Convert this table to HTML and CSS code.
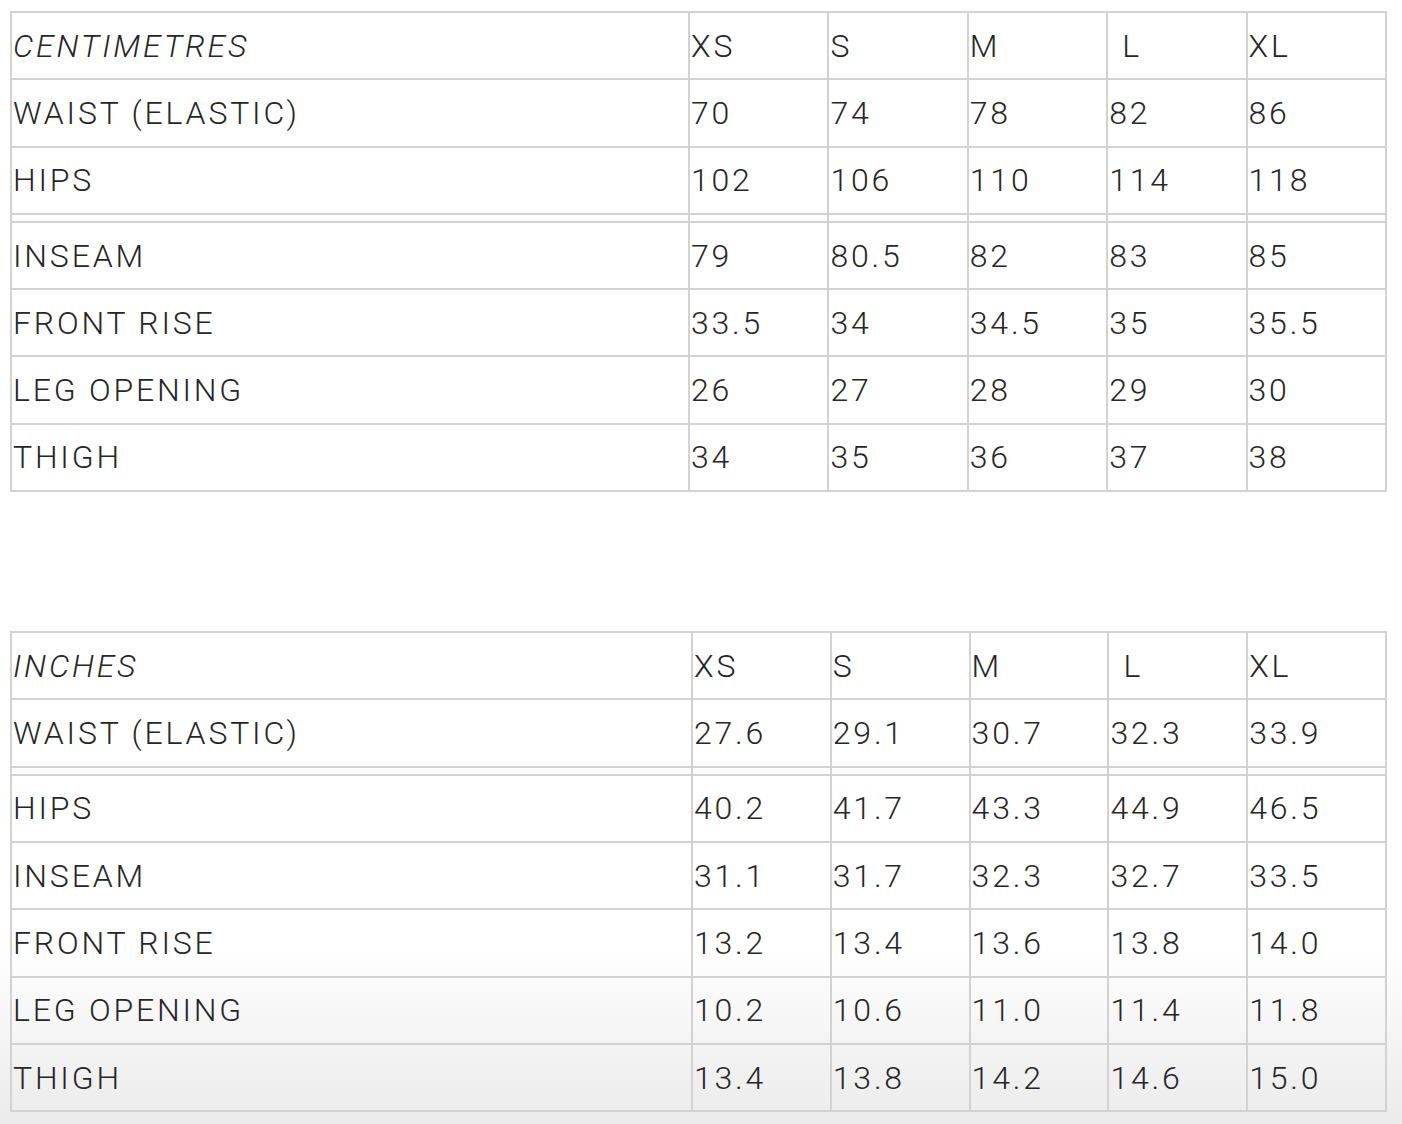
FILE: index.html
```html
<!DOCTYPE html>
<html>
<head>
<meta charset="utf-8">
<link rel="stylesheet" href="styles.css">
</head>
<body>
<div class="page">
  <table class="size-table cm">
    <colgroup><col class="label-col"><col><col><col><col><col></colgroup>
    <tr><td class="unit">CENTIMETRES</td><td>XS</td><td>S</td><td>M</td><td class="l">L</td><td>XL</td></tr>
    <tr><td>WAIST (ELASTIC)</td><td>70</td><td>74</td><td>78</td><td>82</td><td>86</td></tr>
    <tr><td>HIPS</td><td>102</td><td>106</td><td>110</td><td>114</td><td>118</td></tr>
    <tr class="spacer"><td></td><td></td><td></td><td></td><td></td><td></td></tr>
    <tr><td>INSEAM</td><td>79</td><td>80.5</td><td>82</td><td>83</td><td>85</td></tr>
    <tr><td>FRONT RISE</td><td>33.5</td><td>34</td><td>34.5</td><td>35</td><td>35.5</td></tr>
    <tr><td>LEG OPENING</td><td>26</td><td>27</td><td>28</td><td>29</td><td>30</td></tr>
    <tr><td>THIGH</td><td>34</td><td>35</td><td>36</td><td>37</td><td>38</td></tr>
  </table>

  <table class="size-table in">
    <colgroup><col class="label-col"><col><col><col><col><col></colgroup>
    <tr><td class="unit">INCHES</td><td>XS</td><td>S</td><td>M</td><td class="l">L</td><td>XL</td></tr>
    <tr><td>WAIST (ELASTIC)</td><td>27.6</td><td>29.1</td><td>30.7</td><td>32.3</td><td>33.9</td></tr>
    <tr class="spacer"><td></td><td></td><td></td><td></td><td></td><td></td></tr>
    <tr><td>HIPS</td><td>40.2</td><td>41.7</td><td>43.3</td><td>44.9</td><td>46.5</td></tr>
    <tr><td>INSEAM</td><td>31.1</td><td>31.7</td><td>32.3</td><td>32.7</td><td>33.5</td></tr>
    <tr><td>FRONT RISE</td><td>13.2</td><td>13.4</td><td>13.6</td><td>13.8</td><td>14.0</td></tr>
    <tr><td>LEG OPENING</td><td>10.2</td><td>10.6</td><td>11.0</td><td>11.4</td><td>11.8</td></tr>
    <tr><td>THIGH</td><td>13.4</td><td>13.8</td><td>14.2</td><td>14.6</td><td>15.0</td></tr>
  </table>
</div>
</body>
</html>
```

FILE: styles.css
```css
html {
  background: #ffffff;
}

body {
  margin: 0;
  padding: 0;
  min-height: 1124px;
  background: linear-gradient(to bottom, #ffffff 0px, #ffffff 950px, #f4f4f4 1040px, #ebebeb 1124px);
}

.page {
  padding: 11px 15px 0 10px;
  display: flex;
  flex-direction: column;
  gap: 139px;
}

.size-table {
  width: 1377px;
  border-collapse: collapse;
  table-layout: fixed;
  font-family: "Roboto", "Liberation Sans", sans-serif;
  font-weight: 300;
  font-size: 32px;
  letter-spacing: 2.8px;
  color: #262626;
  background: transparent;
}

.size-table td {
  border: 2px solid #d2d2d2;
  height: 65.3px;
  padding: 0 0 0 1px;
  vertical-align: middle;
  white-space: nowrap;
  overflow: hidden;
}

.size-table td.unit {
  font-style: italic;
}

.size-table td.l {
  padding-left: 14px;
}

.cm .label-col { width: 678px; }
.in .label-col { width: 681px; }

.size-table tr.spacer td {
  height: 6px;
  padding: 0;
  font-size: 0;
  line-height: 0;
}
```
